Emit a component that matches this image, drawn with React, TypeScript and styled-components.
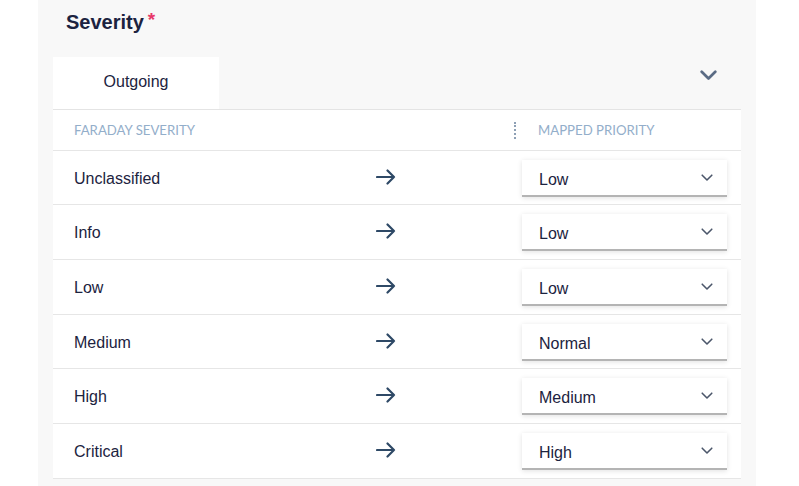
import React from "react";
import styled, { createGlobalStyle } from "styled-components";

const Global = createGlobalStyle`
  html, body { margin: 0; padding: 0; background: #ffffff; }
  body { font-family: "Liberation Sans", Arial, sans-serif; color: #1c2340; }
`;

const Panel = styled.section`
  margin-left: 38px;
  width: 718px;
  min-height: 486px;
  background: #f8f8f8;
  padding: 0 15px;
  box-sizing: border-box;
`;

const Title = styled.h2`
  margin: 0;
  padding: 8px 0 0 13px;
  font-size: 20px;
  line-height: 23px;
  font-weight: 700;
  color: #1c2340;
  height: 57px;
  box-sizing: border-box;
`;

const Required = styled.span`
  color: #e8386a;
  font-size: 19px;
  font-weight: 700;
  margin-left: 4px;
  vertical-align: 3px;
`;

const TabBar = styled.div`
  display: flex;
  align-items: stretch;
  justify-content: space-between;
  height: 53px;
  border-bottom: 1px solid #e4e4e4;
  box-sizing: border-box;
`;

const Tab = styled.div`
  width: 166px;
  background: #ffffff;
  display: flex;
  align-items: center;
  justify-content: center;
  font-size: 16px;
  color: #1c2340;
  padding-bottom: 3px;
  box-sizing: border-box;
`;

const Collapse = styled.div`
  display: flex;
  align-items: center;
  padding: 0 24px 16px 0;
`;

const Table = styled.div`
  background: #ffffff;
`;

const Grid = styled.div<{ $h: string }>`
  display: grid;
  grid-template-columns: 222px 180px 1fr 205px;
  align-items: center;
  height: ${(p) => p.$h};
  padding: 0 14px 0 21px;
  border-bottom: 1px solid #e6e6e6;
  box-sizing: border-box;
`;

const HeadCell = styled.div<{ $pad?: number }>`
  font-family: Lato, "Open Sans", sans-serif;
  font-size: 13.2px;
  color: #93aeca;
  text-transform: uppercase;
  padding-left: ${(p) => p.$pad ?? 0}px;
`;

const Divider = styled.div`
  justify-self: end;
  margin-right: 6px;
  width: 0;
  height: 17px;
  border-left: 2px dotted #8ea0b5;
`;

const Label = styled.div`
  font-size: 16px;
  color: #1c2340;
  padding-top: 2px;
`;

const ArrowCell = styled.div`
  display: flex;
  justify-content: center;
  padding-bottom: 2px;
`;

const Select = styled.div`
  height: 37px;
  background: #ffffff;
  box-shadow: 0 1px 5px rgba(0, 0, 0, 0.12);
  border-bottom: 2px solid #b4b4b4;
  box-sizing: border-box;
  display: flex;
  align-items: center;
  justify-content: space-between;
  padding: 5px 14px 0 17px;
  margin-top: 1px;
  font-size: 16px;
  color: #1c2340;
`;

const ChevronWrap = styled.span`
  display: flex;
  margin-top: -4px;
`;

const Arrow = () => (
  <svg width="20" height="16" viewBox="0 0 20 16" fill="none">
    <path d="M1 8H18M11.5 1.5L18 8L11.5 14.5" stroke="#2e4966" strokeWidth="2.2" strokeLinecap="round" strokeLinejoin="round" />
  </svg>
);

const Chevron = ({ w, sw, color }: { w: number; sw: number; color: string }) => (
  <svg width={w} height={w * 0.6} viewBox="0 0 20 12" fill="none">
    <path d="M2 2L10 10L18 2" stroke={color} strokeWidth={sw} strokeLinecap="round" strokeLinejoin="round" />
  </svg>
);

const rows: [string, string][] = [
  ["Unclassified", "Low"],
  ["Info", "Low"],
  ["Low", "Low"],
  ["Medium", "Normal"],
  ["High", "Medium"],
  ["Critical", "High"],
];

export default function App() {
  return (
    <>
      <Global />
      <Panel>
        <Title>
          Severity<Required>*</Required>
        </Title>
        <TabBar>
          <Tab>Outgoing</Tab>
          <Collapse>
            <Chevron w={17} sw={3.2} color="#5a6b84" />
          </Collapse>
        </TabBar>
        <Table>
          <Grid $h="41px">
            <HeadCell>Faraday Severity</HeadCell>
            <div />
            <Divider />
            <HeadCell $pad={16}>Mapped Priority</HeadCell>
          </Grid>
          {rows.map(([sev, pri], i) => (
            <Grid key={sev} $h={i % 3 === 0 ? "54px" : "55px"}>
              <Label>{sev}</Label>
              <ArrowCell>
                <Arrow />
              </ArrowCell>
              <div />
              <Select>
                <span>{pri}</span>
                <ChevronWrap>
                  <Chevron w={12} sw={2.6} color="#4b566a" />
                </ChevronWrap>
              </Select>
            </Grid>
          ))}
        </Table>
      </Panel>
    </>
  );
}
